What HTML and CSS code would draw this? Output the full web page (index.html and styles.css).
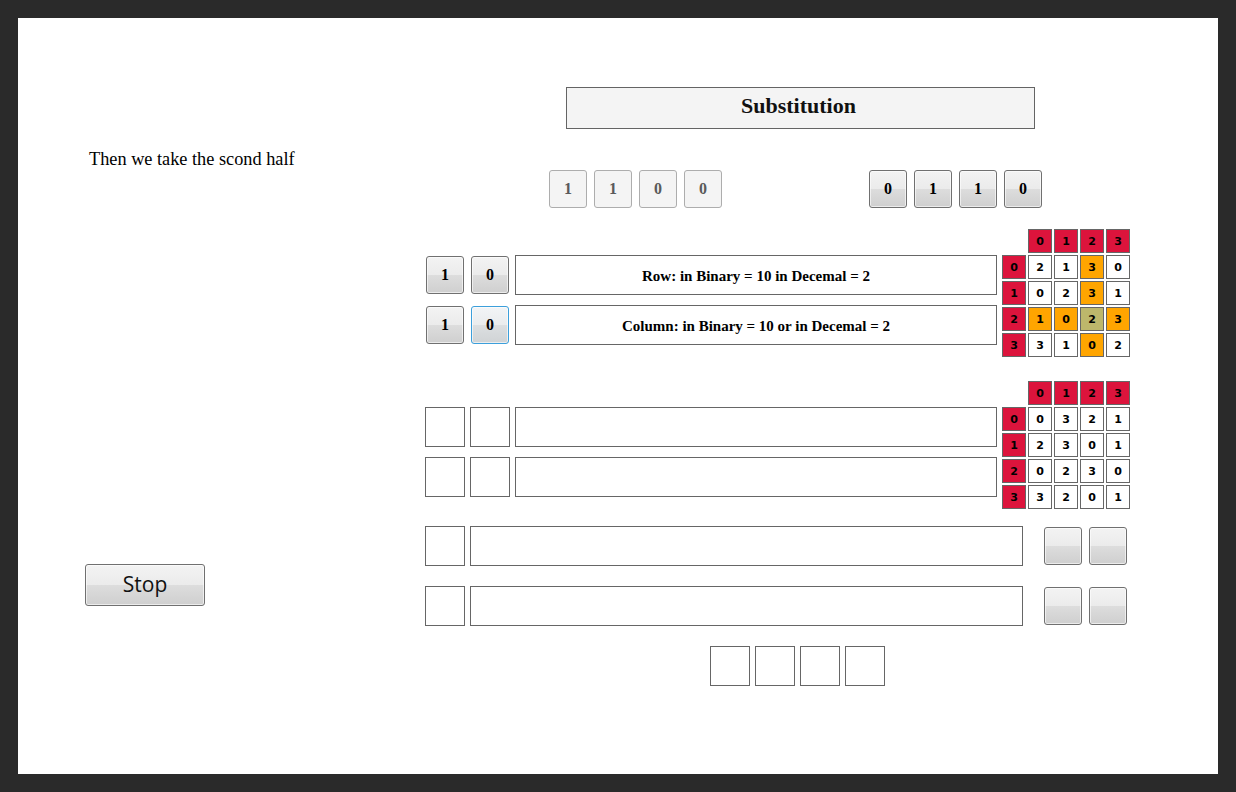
FILE: index.html
```html
<!DOCTYPE html>
<html>
<head>
<meta charset="utf-8">
<title>Substitution</title>
<link rel="stylesheet" href="styles.css">
</head>
<body>
<div class="page">
  <aside class="side">
    <p class="intro">Then we take the scond half</p>
    <button class="btn stop">Stop</button>
  </aside>
  <main class="main">
    <div class="title">Substitution</div>
    <div class="bits">
      <div class="bitgroup">
        <span class="bit dim">1</span><span class="bit dim">1</span><span class="bit dim">0</span><span class="bit dim">0</span>
      </div>
      <div class="bitgroup right">
        <span class="btn bit">0</span><span class="btn bit">1</span><span class="btn bit">1</span><span class="btn bit">0</span>
      </div>
    </div>

    <section class="sbox first">
      <div class="calc">
        <div class="crow">
          <span class="slot"><span class="btn bit">1</span></span>
          <span class="slot"><span class="btn bit">0</span></span>
          <div class="field">Row: in Binary = 10 in Decemal = 2</div>
        </div>
        <div class="crow">
          <span class="slot"><span class="btn bit">1</span></span>
          <span class="slot"><span class="btn bit focus">0</span></span>
          <div class="field">Column: in Binary = 10 or in Decemal = 2</div>
        </div>
      </div>
      <div class="sgrid">
        <span class="blank"></span><span class="c h">0</span><span class="c h">1</span><span class="c h">2</span><span class="c h">3</span>
        <span class="c h">0</span><span class="c">2</span><span class="c">1</span><span class="c o">3</span><span class="c">0</span>
        <span class="c h">1</span><span class="c">0</span><span class="c">2</span><span class="c o">3</span><span class="c">1</span>
        <span class="c h">2</span><span class="c o">1</span><span class="c o">0</span><span class="c k">2</span><span class="c o">3</span>
        <span class="c h">3</span><span class="c">3</span><span class="c">1</span><span class="c o">0</span><span class="c">2</span>
      </div>
    </section>

    <section class="sbox second">
      <div class="calc">
        <div class="crow">
          <span class="slot box"></span>
          <span class="slot box"></span>
          <div class="field"></div>
        </div>
        <div class="crow">
          <span class="slot box"></span>
          <span class="slot box"></span>
          <div class="field"></div>
        </div>
      </div>
      <div class="sgrid">
        <span class="blank"></span><span class="c h">0</span><span class="c h">1</span><span class="c h">2</span><span class="c h">3</span>
        <span class="c h">0</span><span class="c">0</span><span class="c">3</span><span class="c">2</span><span class="c">1</span>
        <span class="c h">1</span><span class="c">2</span><span class="c">3</span><span class="c">0</span><span class="c">1</span>
        <span class="c h">2</span><span class="c">0</span><span class="c">2</span><span class="c">3</span><span class="c">0</span>
        <span class="c h">3</span><span class="c">3</span><span class="c">2</span><span class="c">0</span><span class="c">1</span>
      </div>
    </section>

    <div class="orow r3">
      <span class="slot box"></span>
      <div class="wide"></div>
      <div class="pair">
        <span class="slot"><span class="btn bit"></span></span>
        <span class="slot"><span class="btn bit"></span></span>
      </div>
    </div>
    <div class="orow r4">
      <span class="slot box"></span>
      <div class="wide"></div>
      <div class="pair">
        <span class="slot"><span class="btn bit"></span></span>
        <span class="slot"><span class="btn bit"></span></span>
      </div>
    </div>

    <div class="result">
      <span class="slot box"></span><span class="slot box"></span><span class="slot box"></span><span class="slot box"></span>
    </div>
  </main>
</div>
</body>
</html>
```

FILE: styles.css
```css
* { box-sizing: border-box; }

html, body {
  margin: 0;
  padding: 0;
}

body {
  background: #2a2a2a;
  padding: 18px;
  font-family: "Liberation Serif", "Times New Roman", serif;
}

.page {
  width: 1200px;
  height: 756px;
  background: #ffffff;
  display: flex;
}

.side {
  width: 407px;
  flex: none;
  padding-left: 67px;
}

.intro {
  margin: 131px 0 0 4px;
  font-size: 18.3px;
  line-height: 20px;
  color: #000;
}

.btn {
  background: linear-gradient(to bottom, #f3f3f3 0%, #ebebeb 50%, #dddddd 50%, #cfcfcf 100%);
  border: 1px solid #707070;
  border-radius: 3px;
  box-shadow: inset 0 0 0 1px rgba(255,255,255,0.6);
  color: #000;
}

.stop {
  display: block;
  margin: 395px 0 0 0;
  width: 120px;
  height: 42px;
  padding: 0 0 2px;
  font-family: "Open Sans", "DejaVu Sans", sans-serif;
  font-size: 21px;
  line-height: 38px;
  color: #111;
}

.main {
  flex: none;
  width: 760px;
  padding-top: 69px;
  display: flex;
  flex-direction: column;
  align-items: flex-start;
}

.title {
  margin-left: 141px;
  width: 469px;
  height: 42px;
  background: #f4f4f4;
  border: 1px solid #646464;
  text-align: center;
  font-weight: bold;
  font-size: 22px;
  line-height: 36px;
  padding-bottom: 4px;
  padding-right: 4px;
  color: #111;
}

.bits {
  margin-top: 41px;
  display: flex;
}

.bitgroup {
  display: flex;
  gap: 7px;
  margin-left: 124px;
}

.bitgroup.right {
  margin-left: 147px;
}

.bit {
  width: 38px;
  height: 38px;
  display: flex;
  align-items: center;
  justify-content: center;
  font-family: "Liberation Serif", "Times New Roman", serif;
  font-weight: bold;
  font-size: 16px;
}

.bit.dim {
  background: #f4f4f4;
  border: 1px solid #adadad;
  border-radius: 3px;
  color: #5a5a5a;
}

.bit.focus {
  border-color: #3c9fdb;
  background: linear-gradient(to bottom, #f2f4f6 0%, #eaeced 50%, #dcdfe1 50%, #d0d3d5 100%);
}

.sbox {
  display: flex;
  gap: 5px;
}

.sbox.first { margin-top: 21px; }
.sbox.second { margin-top: 24px; }

.calc {
  width: 572px;
  padding-top: 26px;
  display: flex;
  flex-direction: column;
  gap: 10px;
}

.crow {
  display: flex;
  gap: 5px;
  height: 40px;
}

.slot {
  width: 40px;
  height: 40px;
  flex: none;
  padding: 1px;
  display: block;
}

.slot.box {
  border: 1px solid #666;
  padding: 0;
}

.field {
  width: 482px;
  height: 40px;
  border: 1px solid #666;
  display: flex;
  align-items: center;
  justify-content: center;
  font-weight: bold;
  font-size: 15px;
  padding-top: 2px;
  color: #000;
}

.sgrid {
  display: grid;
  grid-template-columns: repeat(5, 24px);
  grid-auto-rows: 24px;
  gap: 2px;
}

.c {
  border: 1px solid #666;
  background: #fff;
  display: flex;
  align-items: center;
  justify-content: center;
  font-family: "DejaVu Sans", Verdana, sans-serif;
  font-weight: bold;
  font-size: 11px;
  color: #000;
}

.c.h { background: #dc143c; }
.c.o { background: #ffa500; }
.c.k { background: #bdb76b; }

.orow {
  display: flex;
  gap: 5px;
}

.orow.r3 { margin-top: 17px; }
.orow.r4 { margin-top: 20px; }

.wide {
  width: 553px;
  height: 40px;
  border: 1px solid #666;
}

.pair {
  display: flex;
  gap: 5px;
  margin-left: 15px;
}

.result {
  margin-top: 20px;
  margin-left: 285px;
  display: flex;
  gap: 5px;
}
```
